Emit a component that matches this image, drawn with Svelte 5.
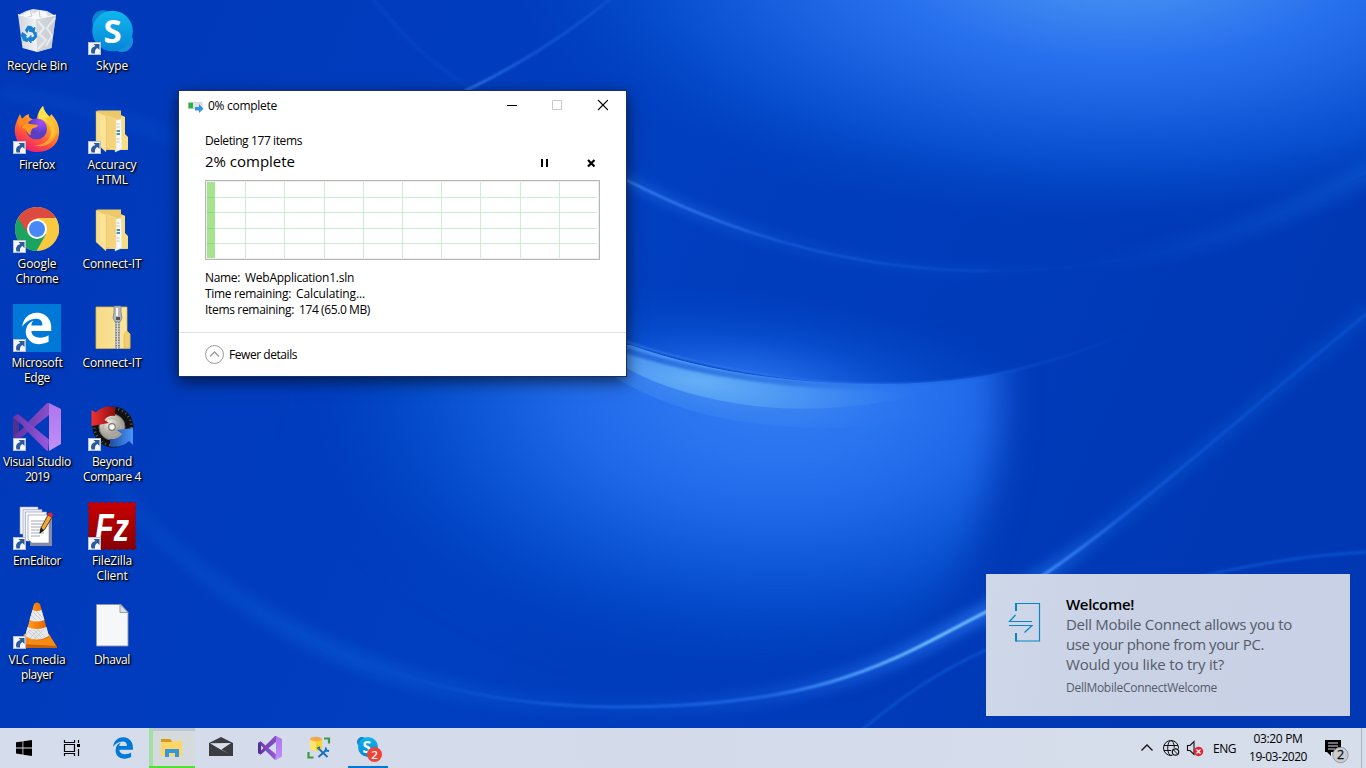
<script>
  // Tracks text out (or in) so that it spans the given number of pixels.
  function fit(node, width) {
    const chars = node.textContent.length;
    const natural = node.getBoundingClientRect().width;
    node.style.letterSpacing = `${(width - natural) / chars}px`;
  }

  const columns = [
    [
      { icon: 'recycle', lines: [['Recycle Bin', 60]] },
      { icon: 'firefox', lines: [['Firefox', 36]], link: true },
      { icon: 'chrome', lines: [['Google', 39], ['Chrome', 43]], link: true },
      { icon: 'edge', lines: [['Microsoft', 51], ['Edge', 26]], link: true },
      { icon: 'vs', lines: [['Visual Studio', 68], ['2019', 24]], link: true },
      { icon: 'emeditor', lines: [['EmEditor', 48]], link: true },
      { icon: 'vlc', lines: [['VLC media', 57], ['player', 32]], link: true }
    ],
    [
      { icon: 'skype', lines: [['Skype', 32]], link: true },
      { icon: 'folder', lines: [['Accuracy', 49], ['HTML', 32]], link: true },
      { icon: 'folder', lines: [['Connect-IT', 59]] },
      { icon: 'zip', lines: [['Connect-IT', 59]] },
      { icon: 'beyond', lines: [['Beyond', 40], ['Compare 4', 58]], link: true },
      { icon: 'filezilla', lines: [['FileZilla', 40], ['Client', 31]], link: true },
      { icon: 'file', lines: [['Dhaval', 36]] }
    ]
  ];

  const details = [
    ['Name:', 35, 'WebApplication1.sln', 109],
    ['Time remaining:', 86, 'Calculating...', 69],
    ['Items remaining:', 89, '174 (65.0 MB)', 71]
  ];

  const message = [
    ['Dell Mobile Connect allows you to', 226],
    ['use your phone from your PC.', 198],
    ['Would you like to try it?', 158]
  ];

  const gridX = [245, 284, 324, 363, 402, 441, 480, 520, 559];
  const gridY = [197, 212, 228, 243];
  const teeth = [0, 6, 12, 18, 24, 30, 36, 42, 48];
</script>

{#snippet edgeLogo(fill)}
  <path {fill} d="M486.286 243.671c0-44.032-7.754-84.465-28.801-122.4C416.498 47.879 343.912 8.001 258.893 8.001 118.962 7.724 40.617 113.214 26.056 227.679c42.429-61.312 117.073-121.376 220.375-124.966 0 0 109.666 0 99.419 104.957H169.997c6.369-37.386 18.554-58.986 34.339-78.926-75.048 34.893-121.85 96.096-120.742 188.315.83 71.448 50.124 144.836 120.743 171.976 83.357 31.847 192.776 7.2 240.132-21.324V363.307c-80.864 56.494-270.871 60.925-272.255-67.572h314.073v-52.064z" />
{/snippet}

{#snippet vsLogo()}
  <path d="M0 14 5 11 13 17.500 0 29z" fill="#4b2a8c" />
  <path d="M0 14v20l5 3 8-6.500-6.500-6.500z" fill="#52308f" />
  <path d="M0 34 5 37 36 12V0L34 0z" fill="url(#vsA)" />
  <path d="M0 14 5 11 36 36.500 35 48 33 47z" fill="url(#vsB)" />
  <path d="M6 19v10l5-5z" fill="#0038b4" class="hole" />
  <path d="M36 0 48 6v35L36 48z" fill="url(#vsC)" />
{/snippet}

{#snippet art(name)}
  {#if name === 'recycle'}
    <path d="M7 7 13 4 20 2 27 3 34 4 41 8 38 14H10z" fill="#d9dde2" />
    <path d="m10 8 7-5 4 4 5-4 7 2 2 5-8 2-8-1z" fill="#f7f8f9" />
    <path d="m17 3 2 6-6 1m13-7 1 7 6 1" fill="none" stroke="#b9bec6" stroke-width=".8" />
    <path d="M5 7.500 23 12l20-4-4.500 33L24 45 9.500 41z" fill="url(#bin)" />
    <path d="m23 12 20-4-4.500 33L24 45z" fill="#cbd0d7" opacity=".75" />
    <path d="m25 14 6 7-5 6 7 6-8 9m17-31-8 10 5 8-6 10" fill="none" stroke="#f2f4f6" stroke-width="2" opacity=".75" />
    <path d="M5 7.500 23 12l20-4" fill="none" stroke="#fafbfb" stroke-width="1.200" />
    <path d="m12.500 23 2.500-4 4 1 1 1.500 2-1-1 5-5-1.500 1.500-1-2-.5-1.500 3zM20.500 26l2.500-1 .5 5-3 3.500h-2.500V36l-3.500-4 3.500-3.500V31l2.500-.5 1-2zM9.500 25.500l4 3-1 .7 1 2 1.500.3-.5 3-4-1-1.500-4-1.500.5z" fill="#1780d0" stroke="#1780d0" stroke-width="1" />
  {:else if name === 'skype'}
    <circle cx="15" cy="14" r="10.800" fill="#0a84d0" />
    <circle cx="34" cy="34" r="11" fill="#1590dd" />
    <circle cx="24.500" cy="24" r="20.300" fill="url(#sky)" />
    <text x="24.500" y="36" text-anchor="middle" font-size="33" font-weight="700" fill="#fff">S</text>
  {:else if name === 'firefox'}
    <path d="M2 27C1 20 4 14 7 8l2 5q3-4 7-5-1 4 3 5h5Q24 7 30 0q1 6 7 11 1-2 1-3c6 6 9 13 8 20-1 12-11 18-22 18S3 38 2 27z" fill="url(#fox)" />
    <path d="M30 0q1 6 8 13c5 7 5 14 0 20 3-12-5-20-12-20-1-5 0-9 4-13z" fill="#ffe44e" />
    <path d="M38 9c6 8 8 15 4 22-4 8-13 11-21 8 12 1 19-8 16-18-1-4-3-6-5-8z" fill="#ffb930" opacity=".75" />
    <circle cx="23.500" cy="23" r="10.500" fill="url(#globeFox)" />
    <path d="M9 22c1-4 5-6 8-4l8 1c0 2-4 3-6 4-1 2-2 4-1 6-5-1-3-6-9-7z" fill="#ff9a20" />
    <path d="M5 16q4-5 10-4-4 3-4 6Q7 19 7 23z" fill="#ff8b22" />
  {:else if name === 'chrome'}
    <circle cx="24" cy="24" r="22" fill="#f9ca3f" />
    <path d="M5 13A22 22 0 0 0 23.500 46L33 29 24 24z" fill="#1ba362" />
    <path d="M24 13h19q5 10 2 18L34 26z" fill="#f9ca3f" />
    <path d="M5 13q7-11 19-11t19 11H24L14 27z" fill="#dc4b3e" />
    <circle cx="24" cy="24" r="10" fill="#fff" />
    <circle cx="24" cy="24" r="8" fill="#4688f4" />
  {:else if name === 'edge'}
    <rect width="48" height="48" fill="#0078d7" />
    <g transform="translate(7.500 8.300) scale(.0632)">{@render edgeLogo('#fff')}</g>
  {:else if name === 'vs'}
    {@render vsLogo()}
  {:else if name === 'emeditor'}
    <path d="M17 13h22v31H17z" fill="#878ba9" />
    <path d="M7 5h18v27H7z" fill="#f4f5fc" stroke="#9da0bd" stroke-width=".6" />
    <path d="M10 7.500h19v28H10z" fill="#e9ebf7" stroke="#979bb9" stroke-width=".6" />
    <path d="M12.500 10h21v29h-21z" fill="#f9faff" stroke="#9296b4" stroke-width=".6" />
    <path d="M15 13h21v28H19l-4-4z" fill="#fff" stroke="#8286a4" stroke-width=".6" />
    <path d="M18 19h13M18 22h12M18 25h11M18 28h11M18 31h13M18 34h9" stroke="#a3a7b6" stroke-width="1" />
    <path d="m27 31 1-5 7-13 4 2-7 12z" fill="#f2a93b" stroke="#513008" stroke-width=".9" />
    <path d="m34.500 13.500 1-2.500q3-1.500 4.500 2l-1.500 2.500z" fill="#d8262e" /><path d="m26.500 31.500 1.500-6 3 3z" fill="#161616" />
  {:else if name === 'vlc'}
    <path d="M11 33h25l8 13H8z" fill="#f48b15" /><path d="m8 43-1 4h37v-2z" fill="#c95f08" />
    <path d="M21 3q3-3 6 0l9 33q-12 7-24 0z" fill="url(#cone)" />
    <path d="m19.500 9-3 10q7 3 15 0l-3-10q-5 2-9 0z" fill="#e8e9eb" />
    <path d="m14.500 26-2.500 9q12 7 24 0l-2.500-9q-10 4-19 0z" fill="#e6e7ea" />
    <path d="m18 14 5 5m-3-8 8 8m-5-9 7 7M15 30l8 8m-6-9 9 9m-5-9 8 8m-4-8 7 7m-20-1 5-6m0 8 9-9m-4 9 9-9" stroke="#bbbfc7" stroke-width=".6" />
  {:else if name === 'folder'}
    <path d="M9 4.500h24V9l4 2v18l3 3v12H17z" fill="#edc968" />
    <path d="m27 14 7-1v30l-7 3z" fill="#f6f8fa" stroke="#d1d3d3" stroke-width=".5" />
    <path d="M28.500 18h3m-3 3h3m-3 12h3m-3 3h3" stroke="#b8c6cf" stroke-width="1" />
    <path d="M28.500 25h3.500m-3.500 3h3.500" stroke="#3c94bd" stroke-width="2" />
    <path d="m33 10 4 1v17l3 3v12l-6 1z" fill="#f7dc86" />
    <path d="m16 9 12 4v31l-12-4z" fill="#f3d37b" stroke="#f9e19a" stroke-width=".7" />
    <path d="m8 5 10 5v36L8 37z" fill="url(#fold)" stroke="#e3b84e" stroke-width=".4" />
  {:else if name === 'zip'}
    <path d="M8 3h31v24l3 3v14.500H8z" fill="url(#fold)" stroke="#dfb34d" stroke-width=".8" />
    <path d="m36 44V30l3-3 3 3v14z" fill="#f1cf73" stroke="#d3a641" stroke-width=".5" />
    <path d="M29.500 15v30" stroke="#b9bcbd" stroke-width="5" />
    <path d="M29.500 15v30" stroke="#686b70" stroke-width="4" stroke-dasharray="1.200 1.400" />
    <path d="M29.500 15v30" stroke="#d9dbdd" stroke-width="1.300" />
    <path d="M26 2h7v6l1 6-2 4h-5l-2-4 1-6z" fill="#b4b7bb" stroke="#696b6e" stroke-width=".6" />
    <path d="M28 4h2v8h-2z" fill="#f8f8f8" /><path d="M28 13h4v3h-4z" fill="#515457" />
  {:else if name === 'beyond'}
    <circle cx="25" cy="24" r="20.500" fill="#111" />
    <circle cx="25" cy="24" r="18.500" fill="none" stroke="#5b5b5b" stroke-width="2.500" stroke-dasharray="1 3" />
    <circle cx="24" cy="24" r="13" fill="url(#disc)" stroke="#716e69" stroke-width="1" />
    <circle cx="24" cy="24" r="8.500" fill="none" stroke="#b5b2aa" stroke-width="1" />
    <circle cx="24" cy="24" r="3.300" fill="#f8f8f6" stroke="#777" stroke-width="1.200" />
    <path d="M3.500 7 8 9.500Q15 2 27 4v9q-7-1-10.500 4L21 20 3.500 23z" fill="url(#redA)" />
    <path d="M45 42 41 38Q34 45 22 43.500V36q8 1 12-5l-5-4 16-2z" fill="url(#blueA)" />
  {:else if name === 'filezilla'}
    <rect width="48" height="48" fill="url(#fz)" />
    {#each teeth as t}
      <circle cx={t} cy="-.2" r="1.500" fill="#0037b5" /><circle cx={t} cy="48.200" r="1.500" fill="#0037b5" />
      <circle cx="-.2" cy={t} r="1.500" fill="#0037b5" /><circle cx="48.200" cy={t} r="1.500" fill="#0037b5" />
    {/each}
    <text class="fz" x="7" y="39" font-size="38" textLength="34" lengthAdjust="spacingAndGlyphs">Fz</text>
  {:else if name === 'file'}
    <path d="M8.500 3.500H33l7 8V45H8.500z" fill="#f6f7f8" stroke="#8d949e" stroke-width=".9" />
    <path d="M32 3.500v8h8z" fill="#dce1e8" stroke="#8d949e" stroke-width=".9" />
  {/if}
{/snippet}

<main>
  <svg class="wallpaper" viewBox="0 0 1366 768" width="1366" height="768" aria-hidden="true" color-interpolation-filters="sRGB">
    <defs>
      <linearGradient id="base" x1="0" y1="0" x2="1" y2=".25">
        <stop offset="0" stop-color="#0038b9" /><stop offset=".5" stop-color="#003fc0" /><stop offset="1" stop-color="#0038b4" />
      </linearGradient>
      <radialGradient id="topGlow" gradientUnits="userSpaceOnUse" cx="0" cy="0" r="1" gradientTransform="translate(1120 -45) scale(620 275)">
        <stop offset="0" stop-color="#4791f4" /><stop offset=".18" stop-color="#3e88f1" /><stop offset=".38" stop-color="#2871ee" /><stop offset=".55" stop-color="#1b62e1" /><stop offset=".75" stop-color="#0851d1" stop-opacity=".9" /><stop offset="1" stop-color="#0041c0" stop-opacity="0" />
      </radialGradient>
      <radialGradient id="lowGlow" gradientUnits="userSpaceOnUse" cx="0" cy="0" r="1" gradientTransform="translate(780 385) scale(480 290)">
        <stop offset="0" stop-color="#3580f2" /><stop offset=".2" stop-color="#2c77f1" /><stop offset=".45" stop-color="#1f69e9" /><stop offset=".64" stop-color="#0d57d6" /><stop offset=".8" stop-color="#034bca" stop-opacity=".8" /><stop offset="1" stop-color="#0040c0" stop-opacity="0" />
      </radialGradient>
      <radialGradient id="spot" gradientUnits="userSpaceOnUse" cx="0" cy="0" r="1" gradientTransform="translate(700 382) rotate(8) scale(230 62)">
        <stop stop-color="#66aff7" /><stop offset=".35" stop-color="#519cf4" stop-opacity=".9" /><stop offset="1" stop-color="#3580f2" stop-opacity="0" />
      </radialGradient>
      <radialGradient id="aboveArc" gradientUnits="userSpaceOnUse" cx="0" cy="0" r="1" gradientTransform="translate(740 382) rotate(5) scale(330 95)">
        <stop stop-color="#2a73ee" /><stop offset=".25" stop-color="#1b63e2" stop-opacity=".9" /><stop offset=".5" stop-color="#0a52d2" stop-opacity=".7" /><stop offset="1" stop-color="#0043c4" stop-opacity="0" />
      </radialGradient>
      <linearGradient id="arc1" gradientUnits="userSpaceOnUse" x1="620" y1="0" x2="1366" y2="0">
        <stop stop-color="#4a93ff" /><stop offset=".1" stop-color="#3b84fb" /><stop offset=".22" stop-color="#1a62e0" /><stop offset=".45" stop-color="#0a50cd" /><stop offset=".6" stop-color="#0649c6" stop-opacity=".6" /><stop offset="1" stop-color="#0a52cd" stop-opacity=".3" />
      </linearGradient>
      <linearGradient id="arc2" gradientUnits="userSpaceOnUse" x1="626" y1="0" x2="1145" y2="0">
        <stop stop-color="#3a83f5" /><stop offset=".5" stop-color="#2a72ec" /><stop offset=".7" stop-color="#1258d6" /><stop offset="1" stop-color="#0a4fcc" stop-opacity="0" />
      </linearGradient>
      <linearGradient id="band" gradientUnits="userSpaceOnUse" x1="620" y1="0" x2="900" y2="0">
        <stop stop-color="#1458d3" stop-opacity=".7" /><stop offset=".6" stop-color="#1a60de" stop-opacity=".5" /><stop offset="1" stop-color="#1a60de" stop-opacity="0" />
      </linearGradient>
      <linearGradient id="swoosh" gradientUnits="userSpaceOnUse" x1="100" y1="0" x2="1366" y2="0">
        <stop stop-color="#0850cc" stop-opacity="0" /><stop offset=".22" stop-color="#0850cc" stop-opacity=".2" /><stop offset=".35" stop-color="#1059d5" /><stop offset=".53" stop-color="#2167e6" /><stop offset=".59" stop-color="#4c9bfb" /><stop offset=".66" stop-color="#7fccff" /><stop offset=".7" stop-color="#70beff" /><stop offset=".755" stop-color="#3a84f5" /><stop offset=".81" stop-color="#165cdc" /><stop offset=".88" stop-color="#0a51cd" /><stop offset="1" stop-color="#0850cc" />
      </linearGradient>
      <linearGradient id="haze" gradientUnits="userSpaceOnUse" x1="100" y1="0" x2="1366" y2="0">
        <stop stop-color="#0950cc" stop-opacity=".5" /><stop offset=".2" stop-color="#0b57d2" /><stop offset=".4" stop-color="#0a50d0" stop-opacity=".35" /><stop offset=".55" stop-color="#1a62e4" stop-opacity=".6" /><stop offset=".7" stop-color="#2d7af5" /><stop offset=".8" stop-color="#0a52ce" stop-opacity=".8" /><stop offset="1" stop-color="#0850cc" stop-opacity=".6" />
      </linearGradient>
      <linearGradient id="sweep" gradientUnits="userSpaceOnUse" x1="1080" y1="0" x2="1366" y2="0"><stop stop-color="#0b54cf" stop-opacity="0" /><stop offset="1" stop-color="#0d58d2" /></linearGradient>
      <linearGradient id="ray" gradientUnits="userSpaceOnUse" x1="465" y1="90" x2="615" y2="0"><stop stop-color="#3a7df0" /><stop offset=".4" stop-color="#145ad8" /><stop offset="1" stop-color="#1a60dc" stop-opacity=".5" /></linearGradient>
      <clipPath id="under"><path d="M0 345H630Q740 384 881 384T1140 326L1366 250V768H0z" /></clipPath>
      <clipPath id="over"><path d="M600 180V333Q740 384 881 384T1140 326V180z" /></clipPath>
      <filter id="b1" x="-20%" y="-20%" width="140%" height="140%"><feGaussianBlur stdDeviation=".8" /></filter>
      <filter id="b6" x="-20%" y="-20%" width="140%" height="140%"><feGaussianBlur stdDeviation="6" /></filter>
      <filter id="b14" x="-20%" y="-20%" width="140%" height="140%"><feGaussianBlur stdDeviation="18" /></filter>

      <linearGradient id="vsA"><stop stop-color="#5f31a4" /><stop offset="1" stop-color="#8950c8" /></linearGradient>
      <linearGradient id="vsB"><stop stop-color="#6736aa" /><stop offset="1" stop-color="#9859dc" /></linearGradient>
      <linearGradient id="vsC" x2="0" y2="1"><stop stop-color="#ad75ec" /><stop offset="1" stop-color="#c190f7" /></linearGradient>
      <linearGradient id="bin"><stop stop-color="#d1d6dd" /><stop offset=".5" stop-color="#f0f2f4" /><stop offset="1" stop-color="#b8bec6" /></linearGradient>
      <linearGradient id="sky" x2="0" y2="1"><stop stop-color="#10b6ee" /><stop offset="1" stop-color="#0586d7" /></linearGradient>
      <linearGradient id="fox" x1=".8" y1="0" x2=".3" y2="1"><stop stop-color="#fff044" /><stop offset=".4" stop-color="#ff9d28" /><stop offset=".7" stop-color="#ff543b" /><stop offset="1" stop-color="#eb1779" /></linearGradient>
      <radialGradient id="globeFox" cx=".7" cy=".2"><stop stop-color="#a74cff" /><stop offset="1" stop-color="#5a3fc5" /></radialGradient>
      <linearGradient id="cone"><stop stop-color="#ffad3b" /><stop offset=".45" stop-color="#f68209" /><stop offset="1" stop-color="#d95d00" /></linearGradient>
      <linearGradient id="fold"><stop stop-color="#f6da85" /><stop offset="1" stop-color="#fce8a1" /></linearGradient>
      <radialGradient id="disc" cx=".35" cy=".3"><stop stop-color="#f4f1e8" /><stop offset="1" stop-color="#a5a199" /></radialGradient>
      <linearGradient id="redA"><stop stop-color="#f3302f" /><stop offset="1" stop-color="#8f0f12" /></linearGradient>
      <linearGradient id="blueA"><stop stop-color="#1d4fa5" /><stop offset="1" stop-color="#4b95fa" /></linearGradient>
      <linearGradient id="fz" x2="0" y2="1"><stop stop-color="#c90003" /><stop offset="1" stop-color="#870002" /></linearGradient>
    </defs>
    <rect width="1366" height="768" fill="url(#base)" />
    <path d="M430 -40Q500 110 600 166C720 232 850 271 989 271S1260 235 1400 155V-40z" fill="url(#topGlow)" />
    <g clip-path="url(#over)"><path d="M400 180h820v220H400z" fill="url(#aboveArc)" /></g>
    <g clip-path="url(#under)">
      <path d="M250 250H970Q1005 330 1000 430 990 520 950 590 800 740 600 720T280 560z" fill="url(#lowGlow)" filter="url(#b14)" />
      <path d="M560 330Q626 408 760 424T990 392V330z" fill="url(#spot)" opacity=".35" />
      <path d="M580 330Q626 386 740 404T1000 372V300z" fill="url(#spot)" />
    </g>
    <path d="M612 346Q740 389 900 387" fill="none" stroke="url(#band)" stroke-width="6" filter="url(#b1)" />
    <path d="M600 333Q740 384 881 384T1140 326" fill="none" stroke="url(#arc2)" stroke-width="2" opacity=".8" filter="url(#b1)" />
    <path d="M600 166C720 232 850 271 989 271S1260 235 1380 165" fill="none" stroke="url(#arc1)" stroke-width="10" opacity=".3" filter="url(#b6)" />
    <path d="M600 166C720 232 850 271 989 271" fill="none" stroke="url(#arc1)" stroke-width="1.800" filter="url(#b1)" />
    <path d="M989 271C1130 271 1260 235 1380 165" fill="none" stroke="url(#arc1)" stroke-width="2" opacity=".4" filter="url(#b1)" />
    <path d="M1050 268Q1240 250 1390 160" fill="none" stroke="url(#sweep)" stroke-width="24" opacity=".5" filter="url(#b6)" />
    <path d="M465 91Q550 50 615 -5" fill="none" stroke="url(#ray)" stroke-width="2.500" filter="url(#b1)" />
    <path d="M370 -5Q420 60 475 90" fill="none" stroke="#0a50cf" stroke-width="6" opacity=".25" filter="url(#b1)" />
    <path d="M0 93Q80 100 180 140" fill="none" stroke="#0a50cf" stroke-width="14" opacity=".3" filter="url(#b6)" />
    <path d="M90 455C210 620 400 707 617 707S900 655 986 612C1100 545 1200 450 1370 311" fill="none" stroke="url(#haze)" stroke-width="18" opacity=".65" filter="url(#b6)" />
    <path d="M100 470C230 620 400 707 617 707S900 655 986 612C1100 545 1200 450 1370 311" fill="none" stroke="url(#swoosh)" stroke-width="3" filter="url(#b1)" />
    <path d="M862 730Q920 680 986 650C1080 607 1220 560 1366 552" fill="none" stroke="#0f58d6" stroke-width="3" opacity=".7" filter="url(#b1)" />
  </svg>

  <section class="desktop">
    {#each columns as column}
      <div class="column">
        {#each column as item}
          <div class="shortcut">
            <svg viewBox="0 0 48 48" width="48" height="48">
              {@render art(item.icon)}
              {#if item.link}
                <rect x=".5" y="35.500" width="12" height="12" fill="#f4f6f9" stroke="#b8c0cc" />
                <path d="M3.500 46.500q-2-6 4-7.500L5.500 37h6v6l-2-2q-3 1-2.500 5.500z" fill="#2b5b9e" />
              {/if}
            </svg>
            <div class="label">
              {#each item.lines as [text, width]}
                <div><span use:fit={width}>{text}</span></div>
              {/each}
            </div>
          </div>
        {/each}
      </div>
    {/each}
  </section>

  <section class="window">
    <header>
      <svg class="app" width="16" height="12" viewBox="0 0 16 12">
        <path d="M0 1.500h14v6H0z" fill="#dfe1e3" stroke="#c3c5c8" stroke-width=".6" /><path d="M.500 1.800h4.500v5.400H.500z" fill="#27b53a" />
        <path d="M7 6h4V3l4.500 4.700L11 12V9.500H7z" fill="#2f94e3" />
      </svg>
      <span class="title" use:fit={69}>0% complete</span>
      <svg class="controls" width="102" height="12" viewBox="506 99 102 12" fill="none">
        <path d="M507 105.500h10" stroke="#000" /><path d="M552.500 100.500h9v9h-9z" stroke="#c8c8c8" /><path d="m598 100 10 10m0-10-10 10" stroke="#000" stroke-width="1.100" />
      </svg>
    </header>
    <div class="body">
      <div class="what"><span use:fit={97}>Deleting 177 items</span></div>
      <div class="progress">
        <span use:fit={90}>2% complete</span>
        <svg width="55" height="10" viewBox="541 158 55 10">
          <path d="M541 159h2v8h-2zM546 159h2v8h-2z" /><path d="m588 160 6.500 6.500m0-6.500-6.500 6.500" stroke="#000" stroke-width="2.200" />
        </svg>
      </div>
      <svg class="chart" width="395" height="80" viewBox="205 180 395 80" shape-rendering="crispEdges">
        <path d="M205.500 180.500h394v79h-394z" fill="#fff" stroke="#b7b7b7" />
        <path d="M206.500 181.500h392v77h-392z" fill="none" stroke="#ececec" />
        <path d="M207 182h8v76h-8z" fill="#a6e58e" />
        {#each gridX as x}<path d={`M${x + 0.5} 182v76`} stroke="#caeed3" />{/each}
        {#each gridY as y}<path d={`M215 ${y + 0.5}h382`} stroke="#caeed3" /><path d={`M207 ${y + 0.5}h7`} stroke="#8bd978" />{/each}
      </svg>
      <div class="details">
        {#each details as [name, nameWidth, value, valueWidth]}
          <div><span use:fit={nameWidth}>{name}</span><span use:fit={valueWidth}>{value}</span></div>
        {/each}
      </div>
    </div>
    <footer>
      <svg width="20" height="20" viewBox="0 0 20 20" fill="none" stroke="#9b9b9b"><circle cx="9.500" cy="9.500" r="9" /><path d="m5 11.500 4.500-4.500 4.500 4.500" stroke-width="1.300" /></svg>
      <span use:fit={68}>Fewer details</span>
    </footer>
  </section>

  <section class="toast">
    <svg width="34" height="42" viewBox="1008 601 34 42" fill="none" stroke="#0b86c0" stroke-width="1.200">
      <path d="M1016 603.500h23.500v37.500H1016" /><path d="M1016 603v8M1016 633v8.600" stroke-width="2" /><path d="M1032 621.500h-22.500l6-6.500M1009 625.500h23l-7.500 7" />
    </svg>
    <div>
      <strong use:fit={68}>Welcome!</strong>
      {#each message as [text, width]}<p><span use:fit={width}>{text}</span></p>{/each}
      <small use:fit={151}>DellMobileConnectWelcome</small>
    </div>
  </section>

  <nav>
    <svg width="48" height="40" viewBox="0 728 48 40"><path d="m16 742.300 6.500-.9v6.100H16zm7.300-1 8.700-1.300v7.500h-8.700zM16 748.400h6.500v6.100l-6.500-.9zm7.300 0H32v7.500l-8.700-1.200z" /></svg>
    <svg width="50" height="40" viewBox="48 728 50 40" fill="none" stroke="#000" stroke-width="1.200"><path d="M64.500 740v2.500h10V740M64.500 756v-2.500h10v2.500M64.500 744.500h10v7h-10zM78.500 740v3M78.500 749v7" /><path d="M77 744h3v3h-3z" fill="#000" stroke="none" /></svg>
    <svg width="49" height="40" viewBox="98 728 49 40"><g transform="translate(112 737) scale(.043)">{@render edgeLogo('#0078d7')}</g></svg>
    <svg width="49" height="40" viewBox="147 728 49 40">
      <path d="M150 728h45v40h-45z" fill="#d5dadd" /><path d="M153 728h42v3h-42z" fill="#bcc5d6" /><path d="M149 728h4v40h-4z" fill="#a1dfa5" /><path d="M149 766h46v2h-46z" fill="#4ee034" />
      <path d="M161 739h9l2 2v4h-11z" fill="#d79a16" /><path d="M161 742h10l2-1h9v15h-21z" fill="#ffd565" /><path d="M165 757v-8h14v8h-4v-4h-6v4z" fill="#3197df" />
    </svg>
    <svg width="49" height="40" viewBox="196 728 49 40"><path d="m209 743 12-6 12 6v13h-24z" fill="#3b3d40" /><path d="m210 743.300 21-.3-9.500 6.500 7 4-8-4z" fill="#d9dfeb" /></svg>
    <div class="vs"><svg class="small-vs" width="24" height="24" viewBox="0 0 48 48">{@render vsLogo()}</svg></div>
    <svg width="49" height="40" viewBox="294 728 49 40">
      <path d="M310 739v10q6 4 12 0v-10z" fill="#fad42d" /><path d="M310 739v10q3 2 6 2v-10z" fill="#ffe56d" /><ellipse cx="316" cy="739" rx="6" ry="2.200" fill="#f4a64a" />
      <path d="M324 738.500h5v5M308.500 752v5.500h5" fill="none" stroke="#3c9b45" stroke-width="2.200" />
      <path d="m318.500 748.500 9 8.500m-.5-7.500-8.500 7.500" fill="none" stroke="#1770bb" stroke-width="1.800" /><path d="m317 748.500 3-1.500M326 747.500l-.5 3 3.500.5" fill="none" stroke="#1770bb" stroke-width="1.800" />
    </svg>
    <svg width="49" height="40" viewBox="343 728 49 40">
      <circle cx="362" cy="742" r="5" fill="#0987d0" /><circle cx="368" cy="747" r="10" fill="url(#sky)" /><text x="367" y="752.500" font-size="16" font-weight="700" text-anchor="middle" fill="#fff">S</text>
      <circle cx="374.500" cy="754.500" r="7.500" fill="#ee4436" /><text x="374.500" y="759" font-size="11.500" font-weight="600" text-anchor="middle" fill="#fff">2</text>
      <path d="M348 766h40v2h-40z" fill="#0078d7" />
    </svg>
    <div class="tray">
      <svg width="66" height="40" viewBox="1140 728 66 40" fill="none" stroke="#111">
        <path d="m1141.500 750.500 5.500-5.500 5.500 5.500" stroke-width="1.300" />
        <circle cx="1171" cy="748" r="7.500" /><ellipse cx="1171" cy="748" rx="3.300" ry="7.500" /><path d="M1164 745.500h14M1164 750.500h14" />
        <circle cx="1175.500" cy="752" r="4.500" fill="#d5dcea" stroke="none" /><circle cx="1175.500" cy="752" r="3.200" stroke-width="1.200" /><path d="m1173.500 750 4 4" />
        <path d="M1187.500 745.500h2.500l4-4v13l-4-4h-2.500z" stroke-width="1.100" /><circle cx="1198.500" cy="751.500" r="4.700" fill="#df2433" stroke="none" /><path d="m1196.500 749.500 4 4m0-4-4 4" stroke="#fff" stroke-width="1.300" />
      </svg>
      <span class="lang"><span use:fit={23}>ENG</span></span>
      <div class="clock"><div><span use:fit={49}>03:20 PM</span></div><div><span use:fit={58}>19-03-2020</span></div></div>
      <svg width="50" height="40" viewBox="1316 728 50 40">
        <path d="M1325 740h16v12h-10v4l-4-4h-2z" /><path d="M1328 743h10M1328 746h10M1328 749h7" stroke="#dce2ee" />
        <circle cx="1340.500" cy="755" r="7.700" fill="#c9ccd2" stroke="#8a8d92" stroke-width=".8" /><text x="1340.500" y="759.300" text-anchor="middle" font-size="12.500" fill="#111" stroke="#111" stroke-width=".3">2</text>
        <path d="M1361.500 728v40" stroke="#acb3c0" />
      </svg>
    </div>
  </nav>
</main>

<style>
  :global(body) { margin: 0; overflow: hidden; }
  main { position: relative; width: 1366px; height: 768px; overflow: hidden; display: flex; flex-direction: column; font: 12px/15px "Segoe UI", "Open Sans", "Noto Sans", sans-serif; color: #000; }
  span, strong, small { white-space: nowrap; display: inline-block; }
  svg { display: block; flex: none; }
  .wallpaper { position: absolute; inset: 0; }
  .desktop { position: relative; flex: 1; display: flex; gap: 1px; padding-top: 7px; }
  .column { width: 74px; }
  .shortcut { height: 99px; display: flex; flex-direction: column; align-items: center; }
  .label { margin-top: 3px; color: #fff; text-align: center; text-shadow: 1px 1px 1px #000, 1px 1px 3px #000, 0 0 2px #0008; }
  .fz { font-family: "Liberation Sans", sans-serif; font-weight: 700; font-style: italic; fill: #fff; }
  .window { position: absolute; left: 178px; top: 90px; width: 447px; height: 285px; display: flex; flex-direction: column; background: #fff; border: 1px solid #1c2f5c; box-shadow: 0 5px 15px #0009; }
  header { height: 29px; display: flex; align-items: center; padding: 0 18px 0 9px; }
  .app { margin-top: 2px; }
  .title { margin-left: 4px; }
  .controls { margin: -1px 0 0 auto; }
  .body { flex: 1; padding: 13px 26px 0; }
  .what { height: 17px; line-height: 16px; }
  .progress { display: flex; justify-content: space-between; height: 30px; line-height: 22px; font-size: 15px; }
  .progress svg { margin: 8px 4px 0 0; }
  .details { padding-top: 10px; line-height: 16px; }
  .details div { display: flex; gap: 5px; }
  footer { height: 43px; border-top: 1px solid #dfdfdf; display: flex; align-items: center; gap: 4px; padding-left: 26px; }
  .toast { position: absolute; left: 986px; top: 574px; width: 364px; height: 142px; box-sizing: border-box; display: flex; gap: 24px; padding: 20px 0 0 22px; background: linear-gradient(100deg, #cfd8e9, #cad2e6 40%, #c9d1e6); line-height: 20px; font-size: 15px; color: #555c68; }
  .toast svg { margin-top: 7px; }
  .toast strong { font-weight: 600; color: #000; }
  .toast p { margin: 0; }
  .toast small { font-size: 12px; line-height: 16px; margin-top: 6px; }
  nav { position: relative; height: 40px; display: flex; background: linear-gradient(90deg, #d5dceb, #d3daea 50%, #d7deeb); }
  .vs { width: 49px; height: 40px; display: grid; place-items: center; }
  .small-vs .hole { fill: #d5dceb; }
  .tray { margin-left: auto; display: flex; align-items: center; }
  .lang { width: 37px; padding-left: 7px; box-sizing: border-box; }
  .clock { width: 70px; text-align: center; line-height: 18px; margin-right: 3px; }
</style>
